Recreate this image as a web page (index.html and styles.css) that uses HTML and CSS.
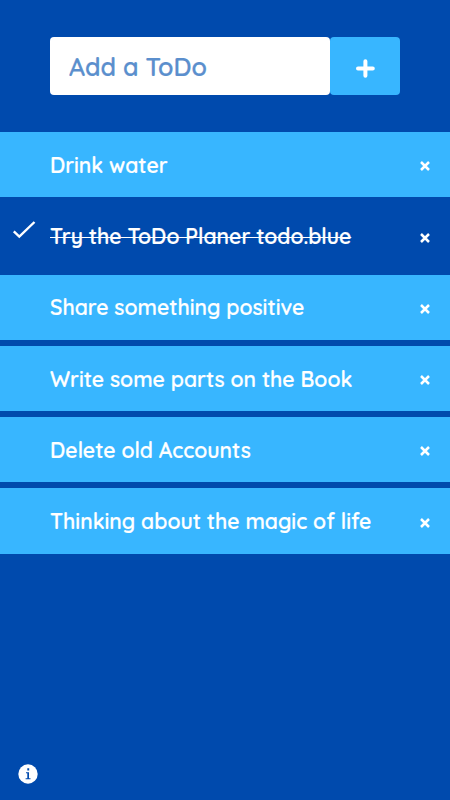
FILE: index.html
```html
<!DOCTYPE html>
<html lang="en">
<head>
<meta charset="utf-8">
<title>ToDo</title>
<link rel="stylesheet" href="styles.css">
</head>
<body>
<form class="add">
  <input class="field" type="text" placeholder="Add a ToDo" aria-label="Add a ToDo">
  <button class="plus" type="button" aria-label="Add"><svg width="20" height="20" viewBox="0 0 20 20"><path d="M10.400 3.200v14.600M3 10.500h14.800"/></svg></button>
</form>
<ul class="list">
  <li class="item"><span class="label">Drink water</span><svg class="remove" viewBox="0 0 12 12"><path d="M2 2l8 8M10 2l-8 8"/></svg></li>
  <li class="item done"><svg class="check" viewBox="0 0 24 20"><path d="M1.800 11.300l5.500 5.200L22.500 2"/></svg><span class="label try">Try the ToDo Planer todo.blue</span><svg class="remove" viewBox="0 0 12 12"><path d="M2 2l8 8M10 2l-8 8"/></svg></li>
  <li class="item"><span class="label">Share something positive</span><svg class="remove" viewBox="0 0 12 12"><path d="M2 2l8 8M10 2l-8 8"/></svg></li>
  <li class="item"><span class="label">Write some parts on the Book</span><svg class="remove" viewBox="0 0 12 12"><path d="M2 2l8 8M10 2l-8 8"/></svg></li>
  <li class="item"><span class="label">Delete old Accounts</span><svg class="remove" viewBox="0 0 12 12"><path d="M2 2l8 8M10 2l-8 8"/></svg></li>
  <li class="item"><span class="label">Thinking about the magic of life</span><svg class="remove" viewBox="0 0 12 12"><path d="M2 2l8 8M10 2l-8 8"/></svg></li>
</ul>
<footer class="footer">
  <svg width="20" height="20" viewBox="0 0 20 20"><circle cx="10" cy="10" r="9.700"/><path d="M9.300 4.300h1.900v2.100H9.300zM8 8.200h3v6.100h1.500v.9H7.600v-.9h1.700V9.200H8z"/></svg>
</footer>
</body>
</html>
```
FILE: styles.css
```css
* { box-sizing: border-box; }
body {
  margin: 0;
  height: 800px;
  display: flex;
  flex-direction: column;
  overflow: hidden;
  background: #004aad;
  color: #fff;
  font-family: Quicksand, Lato, sans-serif;
  font-weight: 600;
}
.add {
  display: flex;
  width: 350px;
  height: 58px;
  margin: 37.300px auto 37px;
}
.field {
  width: 280px;
  padding: 1px 18px 0 19px;
  border: 0;
  border-radius: 4px;
  background: #fff;
  font: inherit;
  font-size: 25px;
  color: #004aad;
}
.field::placeholder { color: #5b8fcd; opacity: 1; -webkit-text-stroke: 0.200px #5b8fcd; }
.plus {
  display: flex;
  align-items: center;
  justify-content: center;
  width: 70px;
  padding: 4px 0 0;
  border: 0;
  border-radius: 4px;
  background: #38b6ff;
}
.plus path { stroke: #fff; stroke-width: 4; stroke-linecap: round; }
.list {
  display: flex;
  flex-direction: column;
  gap: 6.050px;
  margin: 0;
  padding: 0;
  list-style: none;
}
.item {
  position: relative;
  display: flex;
  align-items: center;
  height: 65.200px;
  padding: 0 19px 0 50px;
  background: #38b6ff;
  font-size: 21.170px;
}
.label {
  flex: 1;
  white-space: nowrap;
  -webkit-text-stroke: 0.200px #fff;
}
.done { background: none; }
.try { flex: none; margin-right: auto; text-decoration: line-through; text-decoration-thickness: 1px; }
.check { position: absolute; left: 12px; top: 16px; width: 24px; height: 20px; }
.check path { fill: none; stroke: #fff; stroke-width: 2.400; }
.remove { width: 12px; height: 12px; margin-top: 3px; }
.remove path { fill: none; stroke: #fff; stroke-width: 2.500; }
.footer { margin: auto 0 16px 18px; height: 20px; }
.footer svg { display: block; }
.footer circle { fill: #fff; }
.footer path { fill: #004aad; }
```
